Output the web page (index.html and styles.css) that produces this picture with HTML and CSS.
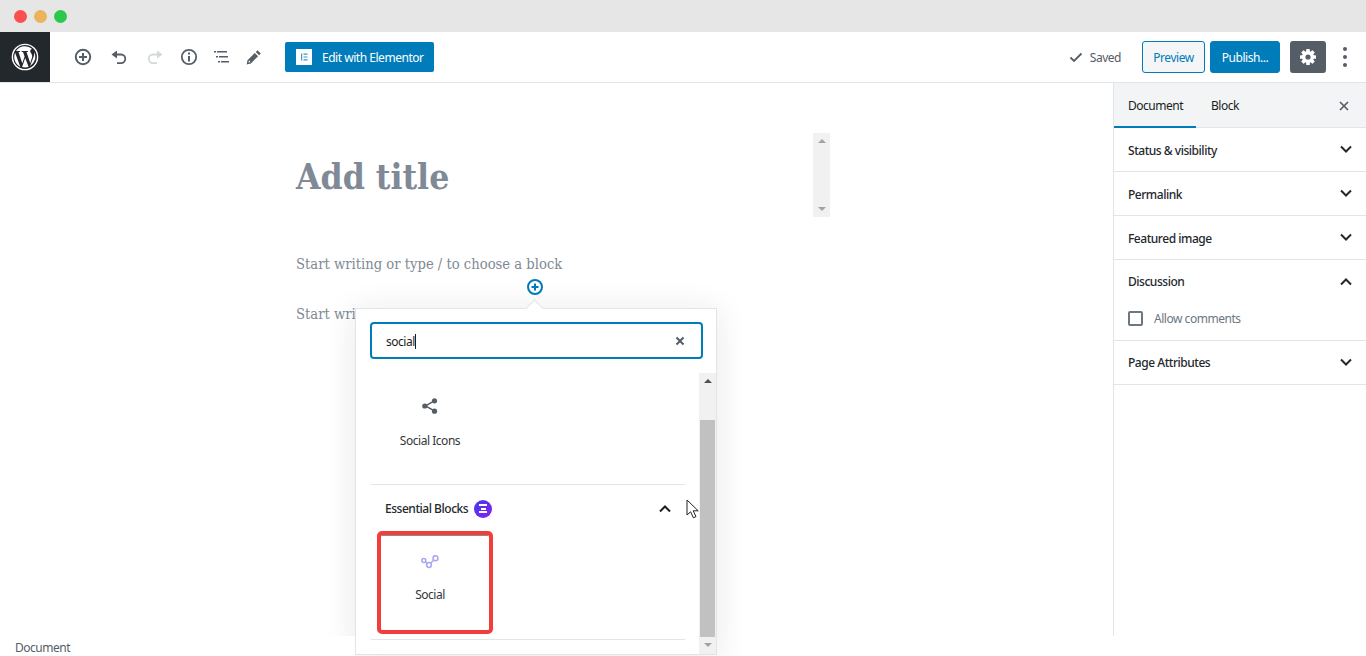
FILE: index.html
```html
<!DOCTYPE html>
<html lang="en">
<head>
<meta charset="utf-8">
<title>Add title</title>
<link rel="stylesheet" href="styles.css">
</head>
<body>
<div class="window">
  <div class="titlebar">
    <span class="dot dot-red"></span><span class="dot dot-amber"></span><span class="dot dot-green"></span>
  </div>
  <header class="topbar">
    <div class="wp-logo">
      <svg width="28" height="28" viewBox="0 0 28 28"><circle cx="14" cy="14" r="12.6" fill="none" stroke="#fff" stroke-width="1.4"/><path fill="#fff" d="M3.2 14c0 4.3 2.5 8 6.100 9.700L4.100 9.700A10.800 10.800 0 0 0 3.200 14zm18-0.500c0-1.300-.5-2.300-.9-3-.6-.9-1.100-1.700-1.100-2.600 0-1 .8-2 1.900-2h.1A10.800 10.800 0 0 0 5 8.100h.7c1.100 0 2.900-.1 2.900-.1.600 0 .6.800.1.900 0 0-.6.1-1.200.1l3.800 11.300 2.300-6.900-1.600-4.400c-.6 0-1.100-.1-1.100-.1-.6 0-.5-.9 0-.9 0 0 1.800.1 2.800.1 1.100 0 2.900-.1 2.900-.1.600 0 .6.800.1.900 0 0-.6.100-1.200.1l3.800 11.200 1-3.500c.5-1.400.8-2.400.8-3.300zm-7 1.400-3.100 9.100a10.800 10.800 0 0 0 6.600-.2l-.1-.1zm9-5.900.1 1.100c0 1.100-.2 2.300-.8 3.800L19.100 23A10.800 10.800 0 0 0 23.200 9z"/></svg>
    </div>
    <div class="tools">
      <svg class="tool" width="20" height="20" viewBox="0 0 20 20" fill="none" stroke="#555d66" stroke-width="2"><circle cx="10" cy="10" r="7.200"/><path d="M10 6v8M6 10h8"/></svg>
      <svg class="tool" width="20" height="20" viewBox="0 0 20 20" fill="none" stroke="#555d66" stroke-width="1.800"><path d="M4.500 7.500h7.500a4.300 4.300 0 0 1 0 8.600H8"/><path fill="#555d66" stroke="none" d="M8 3.500v8L2.500 7.500z"/></svg>
      <svg class="tool" width="20" height="20" viewBox="0 0 20 20" fill="none" stroke="#d5d8da" stroke-width="1.800"><path d="M15.500 7.500H8a4.300 4.300 0 0 0 0 8.600h4"/><path fill="#d5d8da" stroke="none" d="M12 3.500v8l5.500-4z"/></svg>
      <svg class="tool" width="20" height="20" viewBox="0 0 20 20" fill="none" stroke="#555d66" stroke-width="1.800"><circle cx="10" cy="10" r="7.200"/><path stroke-width="2" d="M10 9v5.500M10 5.500v2"/></svg>
      <svg class="tool" width="20" height="20" viewBox="0 0 20 20" fill="#555d66"><rect x="3" y="4" width="2" height="1.500"/><rect x="6" y="4" width="10" height="1.500"/><rect x="5" y="9" width="2" height="1.500"/><rect x="8" y="9" width="9" height="1.500"/><rect x="7" y="14" width="2" height="1.500"/><rect x="10" y="14" width="8" height="1.500"/></svg>
      <svg class="tool" width="20" height="20" viewBox="0 0 20 20" fill="#555d66"><path d="M13.500 3.200l3.300 3.300-1.700 1.700-3.300-3.300zM10.800 5.900l3.300 3.300-7.300 7.300-4.100.9.800-4.200zM5 13.300l-.6 2.100 2.100-.5z"/></svg>
    </div>
    <a class="elementor-btn">
      <span class="elementor-ico"><svg width="16" height="16" viewBox="0 0 16 16"><rect width="16" height="16" fill="#fff"/><path fill="#3f97c8" d="M5 4.500h1.200v7H5zM7.500 4.500H11.500v1.200H7.500zM7.500 7.400H11.500v1.200H7.500zM7.500 10.300H11.500v1.200H7.500z"/></svg></span>
      Edit with Elementor
    </a>
    <div class="spacer"></div>
    <span class="saved">
      <svg width="16" height="16" viewBox="0 0 16 16" fill="none" stroke="#555d66" stroke-width="1.800"><path d="M2.500 8.500l3.500 3.500 7.500-7.500"/></svg>
      Saved
    </span>
    <button class="btn-preview">Preview</button>
    <button class="btn-publish">Publish...</button>
    <button class="btn-settings">
      <svg width="20" height="20" viewBox="0 0 20 20"><g fill="#fff"><circle cx="10" cy="10" r="6"/><rect x="8.200" y="2" width="3.600" height="16" rx=".6"/><rect x="8.200" y="2" width="3.600" height="16" rx=".6" transform="rotate(45 10 10)"/><rect x="8.200" y="2" width="3.600" height="16" rx=".6" transform="rotate(90 10 10)"/><rect x="8.200" y="2" width="3.600" height="16" rx=".6" transform="rotate(135 10 10)"/></g><circle cx="10" cy="10" r="2.600" fill="#555d66"/></svg>
    </button>
    <button class="btn-more" aria-label="More"><i></i><i></i><i></i></button>
  </header>

  <div class="body">
    <main class="editor">
      <div class="title-row">
        <h1 class="post-title">Add title</h1>
        <div class="block-scroll">
          <span class="arrow-up"></span><span class="arrow-down"></span>
        </div>
      </div>
      <p class="placeholder first">Start writing or type / to choose a block</p>
      <div class="inserter-line">
        <svg width="18" height="18" viewBox="0 0 18 18" fill="none" stroke="#007cba" stroke-width="2"><circle cx="9" cy="9" r="7"/><path d="M9 5.500v7M5.500 9h7"/></svg>
      </div>
      <p class="placeholder second">Start writing or type / to choose a block</p>

      <section class="popover">
        <span class="caret"></span>
        <div class="search">
          <span class="search-text">social</span><span class="cursor"></span>
          <svg class="search-x" width="10" height="10" viewBox="0 0 10 10" stroke="#555d66" stroke-width="2"><path d="M1.500 1.500l7 7M8.500 1.500l-7 7"/></svg>
        </div>
        <div class="results">
          <div class="results-list">
            <div class="block-tile plain">
              <svg width="16" height="16" viewBox="0 0 16 16" fill="#555d66"><circle cx="12.500" cy="2.800" r="2.600"/><circle cx="2.800" cy="8" r="2.600"/><circle cx="12.500" cy="13.200" r="2.600"/><path d="M3 7.200l9-5 .8 1.300-9 5zM3.800 7.200l9 5-.8 1.400-9-5z"/></svg>
              <span>Social Icons</span>
            </div>
            <hr class="sep sep-a">
            <div class="panel-head">
              <span class="panel-name">Essential Blocks</span>
              <span class="eb-badge"><i></i><i></i><i></i></span>
              <svg class="panel-chev" width="14" height="9" viewBox="0 0 14 9" fill="none" stroke="#191e23" stroke-width="2"><path d="M2 7.500l5-5 5 5"/></svg>
            </div>
            <div class="block-tile marked">
              <svg width="18" height="14" viewBox="0 0 18 14" fill="none" stroke="#a8a6ee" stroke-width="1.500"><circle cx="2.800" cy="5.500" r="2"/><circle cx="8" cy="10" r="2.400"/><circle cx="14.500" cy="3.200" r="2.500"/><path d="M4.300 7l2 1.500M9.600 8.200l3-3"/></svg>
              <span>Social</span>
            </div>
            <hr class="sep sep-b">
          </div>
          <div class="scrollbar">
            <span class="sb-up"></span>
            <span class="sb-track"><span class="sb-thumb"></span></span>
            <span class="sb-down"></span>
          </div>
        </div>
        <svg class="pointer" width="14" height="20" viewBox="0 0 14 20"><path d="M1 1v15l3.600-3.200 2.800 6 2.600-1.200-2.800-5.800h5z" fill="#fff" stroke="#222" stroke-width="1"/></svg>
      </section>

      <div class="doc-footer">Document</div>
    </main>

    <aside class="sidebar">
      <div class="side-tabs">
        <span class="side-tab active">Document</span>
        <span class="side-tab">Block</span>
        <svg class="side-close" width="10" height="10" viewBox="0 0 10 10" stroke="#555d66" stroke-width="1.700"><path d="M1 1l8 8M9 1l-8 8"/></svg>
      </div>
      <div class="side-panel"><span class="panel-title">Status &amp; visibility</span><svg class="chev" width="14" height="9" viewBox="0 0 14 9" fill="none" stroke="#23282d" stroke-width="2"><path d="M2 1.500l5 5 5-5"/></svg></div>
      <div class="side-panel"><span class="panel-title">Permalink</span><svg class="chev" width="14" height="9" viewBox="0 0 14 9" fill="none" stroke="#23282d" stroke-width="2"><path d="M2 1.500l5 5 5-5"/></svg></div>
      <div class="side-panel"><span class="panel-title">Featured image</span><svg class="chev" width="14" height="9" viewBox="0 0 14 9" fill="none" stroke="#23282d" stroke-width="2"><path d="M2 1.500l5 5 5-5"/></svg></div>
      <div class="side-panel open">
        <div class="open-head"><span>Discussion</span><svg class="chev" width="14" height="9" viewBox="0 0 14 9" fill="none" stroke="#23282d" stroke-width="2"><path d="M2 7.500l5-5 5 5"/></svg></div>
        <label class="check-row"><span class="check"></span>Allow comments</label>
      </div>
      <div class="side-panel"><span>Page Attributes</span><svg class="chev" width="14" height="9" viewBox="0 0 14 9" fill="none" stroke="#23282d" stroke-width="2"><path d="M2 1.500l5 5 5-5"/></svg></div>
    </aside>
  </div>
</div>
</body>
</html>
```
FILE: styles.css
```css
* { box-sizing: border-box; }
html, body { margin: 0; height: 100%; overflow: hidden; background: #fff; }
body { font-family: "Noto Sans", "Open Sans", sans-serif; font-size: 12px; letter-spacing: -0.47px; color: #191e23; }
.window { height: 656px; display: flex; flex-direction: column; }

.titlebar { height: 32px; background: #e6e6e6; display: flex; align-items: center; gap: 7px; padding: 1px 0 0 14px; flex: none; }
.dot { width: 13px; height: 13px; border-radius: 50%; }
.dot-red { background: #f9504f; }
.dot-amber { background: #ebb35c; }
.dot-green { background: #2cc84c; }

.topbar { height: 51px; flex: none; display: flex; align-items: center; border-bottom: 1px solid #e2e4e7; background: #fff; }
.wp-logo { width: 50px; height: 50px; background: #23282d; display: flex; align-items: center; justify-content: center; flex: none; }
.tools { display: flex; margin-left: 23px; }
.tool { display: block; }
.tool:nth-child(2) { margin-left: 16px; }
.tool:nth-child(3) { margin-left: 16px; }
.tool:nth-child(4) { margin-left: 14px; }
.tool:nth-child(5) { margin-left: 12px; }
.tool:nth-child(6) { margin-left: 13px; }
.elementor-btn { margin-left: 21px; height: 30px; width: 149px; border-radius: 2px; background: #007cba; color: #fff; display: flex; align-items: center; gap: 10px; padding-left: 11px; font-size: 12px; }
.elementor-ico { display: flex; }
.spacer { flex: 1; }
.saved { display: flex; align-items: center; gap: 6px; color: #555d66; font-size: 12px; margin-right: 21px; }
.btn-preview, .btn-publish, .btn-settings { font-family: inherit; font-size: 12px; letter-spacing: inherit; height: 32px; border-radius: 3px; padding: 0; }
.btn-preview { width: 63px; background: #f3f5f6; border: 1px solid #007cba; color: #007cba; }
.btn-publish { width: 70px; margin-left: 5px; background: #007cba; border: 1px solid #007cba; color: #fff; }
.btn-settings { width: 36px; margin-left: 10px; background: #555d66; border: 0; display: flex; align-items: center; justify-content: center; }
.btn-more { width: 4px; margin: 0 19px 0 17px; border: 0; background: none; padding: 0; display: flex; flex-direction: column; gap: 4px; }
.btn-more i { width: 4px; height: 4px; border-radius: 50%; background: #555d66; display: block; }

.body { flex: 1; display: flex; min-height: 0; }
.editor { flex: 1; position: relative; padding: 50px 0 0 296px; min-width: 0; }
.title-row { width: 534px; height: 84px; display: flex; justify-content: space-between; }
.post-title { margin: 21px 0 0; font-family: "DejaVu Serif", serif; font-stretch: condensed; font-size: 35.200px; letter-spacing: 0; font-weight: 700; line-height: 46px; color: #7f8a96; }
.block-scroll { width: 17px; background: #f1f1f1; position: relative; }
.arrow-up, .arrow-down { position: absolute; left: 5px; width: 0; height: 0; border-left: 4px solid transparent; border-right: 4px solid transparent; }
.arrow-up { top: 6px; border-bottom: 4px solid #a3a3a3; }
.arrow-down { bottom: 6px; border-top: 4px solid #a3a3a3; }
.placeholder { margin: 0; font-family: "DejaVu Serif", serif; font-stretch: condensed; font-size: 14.650px; letter-spacing: 0; line-height: 22px; color: #7e8993; white-space: nowrap; }
.first { margin-top: 36px; }
.inserter-line { width: 248px; margin-top: 3px; height: 18px; display: flex; justify-content: flex-end; }
.second { margin-top: 7px; }

.popover { position: absolute; left: 355px; top: 225px; width: 362px; height: 347px; background: #fff; border: 1px solid #e2e4e7; box-shadow: 0 3px 30px rgba(25,30,35,.1); display: flex; flex-direction: column; }
.caret { position: absolute; left: 172px; top: -7px; width: 13px; height: 13px; background: #fff; border-left: 1px solid #e2e4e7; border-top: 1px solid #e2e4e7; transform: rotate(45deg); }
.search { position: relative; margin: 13px 13px 0 14px; height: 37px; border: 2px solid #007cba; border-radius: 4px; display: flex; align-items: center; padding: 1px 0 0 14px; font-size: 12px; background: #fff; }
.cursor { width: 1px; height: 15px; background: #191e23; }
.search-x { position: absolute; right: 16px; top: 12px; }
.results { flex: 1; display: flex; margin-top: 14px; min-height: 0; }
.results-list { flex: 1; position: relative; }
.scrollbar { width: 17px; background: #f1f1f1; display: flex; flex-direction: column; align-items: center; }
.sb-up, .sb-down { height: 17px; width: 100%; flex: none; position: relative; }
.sb-up::after, .sb-down::after { content: ""; position: absolute; left: 5px; top: 6px; border-left: 4px solid transparent; border-right: 4px solid transparent; }
.sb-up::after { border-bottom: 4px solid #505050; }
.sb-down::after { border-top: 4px solid #a3a3a3; }
.sb-track { flex: 1; width: 100%; padding-top: 30px; display: flex; }
.sb-thumb { flex: 1; margin: 0 1px; background: #c1c1c1; }

.block-tile { display: flex; flex-direction: column; align-items: center; font-size: 12px; color: #32373c; }
.plain { width: 116px; margin: 25px 0 0 16px; gap: 18px; height: 69px; }
.plain svg { display: block; }
.sep { margin: 0; border: 0; border-top: 1px solid #e2e4e7; width: 314px; }
.sep-a { margin: 17px 0 0 15px; }
.sep-b { margin: 5px 0 0 15px; }
.panel-head { display: flex; align-items: center; height: 47px; padding-left: 29px; position: relative; }
.panel-name { font-size: 12px; font-weight: 500; color: #23282d; }
.eb-badge { margin-left: 6px; width: 18px; height: 18px; border-radius: 50%; background: linear-gradient(135deg, #3d3bf0, #8a1ff0); display: flex; flex-direction: column; align-items: center; justify-content: center; gap: 1.500px; }
.eb-badge i { display: block; height: 2px; background: #fff; width: 8px; }
.eb-badge i:nth-child(2) { width: 5px; }
.panel-chev { position: absolute; left: 302px; top: 19px; }
.marked { margin: -1px 0 0 21px; width: 116px; height: 103px; border: 4px solid #f33d3d; border-radius: 5px; box-shadow: inset 0 1px 0 #8a8a8a; gap: 17px; padding: 20px 10px 0 0; }
.pointer { position: absolute; left: 330px; top: 190px; }

.doc-footer { position: absolute; left: 0; bottom: 0; width: 355px; height: 20px; padding: 3px 0 0 15px; font-size: 12px; color: #555d66; background: #fff; }

.sidebar { width: 253px; flex: none; border-left: 1px solid #e2e4e7; height: 553px; background: #fff; }
.side-tabs { height: 45px; background: #f3f4f5; border-bottom: 1px solid #e2e4e7; display: flex; align-items: stretch; position: relative; }
.side-tab { padding: 0 14px 0 15px; line-height: 45px; font-size: 12px; color: #191e23; }
.side-tab.active { width: 82px; height: 45px; padding-left: 14px; border-bottom: 2px solid #007cba; }
.side-close { position: absolute; right: 17px; top: 18px; }
.side-panel { height: 44px; border-bottom: 1px solid #e2e4e7; display: flex; align-items: center; justify-content: space-between; padding: 0 13px 0 14px; font-size: 12px; font-weight: 500; color: #23282d; }
.panel-title { padding-top: 2px; }
.side-panel.open { height: 81px; display: block; }
.open-head { height: 43px; display: flex; align-items: center; justify-content: space-between; }
.check-row { display: flex; align-items: center; gap: 11px; font-weight: 400; font-size: 12px; color: #6c7781; margin-top: 7px; }
.check { width: 15px; height: 15px; border: 2px solid #6c7781; border-radius: 2px; display: block; }
```
